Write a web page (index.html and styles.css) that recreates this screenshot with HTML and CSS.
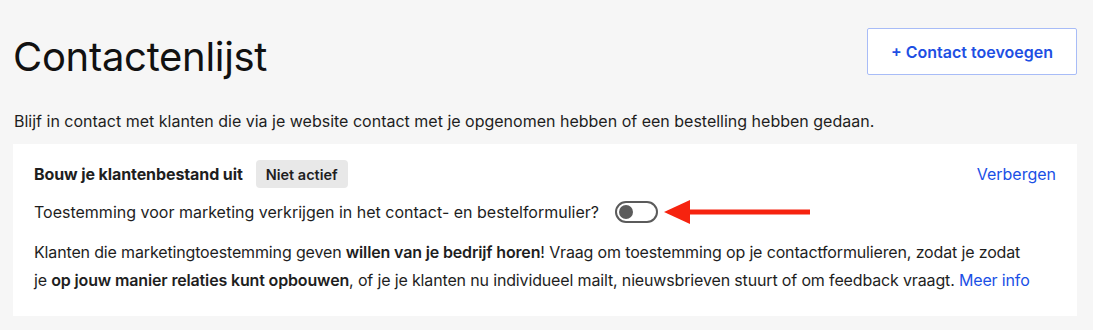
FILE: index.html
```html
<!DOCTYPE html>
<html lang="nl">
<head>
<meta charset="utf-8">
<title>Contactenlijst</title>
<link rel="stylesheet" href="styles.css">
</head>
<body>
<div class="page">
  <header class="header">
    <h1 class="title">Contactenlijst</h1>
    <button class="add-btn">+ Contact toevoegen</button>
  </header>
  <p class="intro">Blijf in contact met klanten die via je website contact met je opgenomen hebben of een bestelling hebben gedaan.</p>
  <section class="card">
    <div class="card-head">
      <div class="card-title">
        <strong>Bouw je klantenbestand uit</strong>
        <span class="badge">Niet actief</span>
      </div>
      <a class="link" href="#">Verbergen</a>
    </div>
    <div class="consent">
      <span>Toestemming voor marketing verkrijgen in het contact- en bestelformulier?</span>
      <span class="toggle"><span class="knob"></span></span>
      <span class="arrow-wrap">
        <svg class="arrow" width="148" height="26" viewBox="0 0 148 26">
          <polygon points="0,13 26,1 26,25" fill="#f6230f"/>
          <rect x="24" y="10.5" width="122" height="5" fill="#f6230f"/>
        </svg>
      </span>
    </div>
    <p class="desc">Klanten die marketingtoestemming geven <b>willen van je bedrijf horen</b>! Vraag om toestemming op je contactformulieren, zodat je zodat je <b>op jouw manier relaties kunt opbouwen</b>, of je je klanten nu individueel mailt, nieuwsbrieven stuurt of om feedback vraagt. <a class="link" href="#">Meer info</a></p>
  </section>
</div>
</body>
</html>
```

FILE: styles.css
```css
* { box-sizing: border-box; }
html, body { margin: 0; padding: 0; }
body {
  background: #f6f6f6;
  font-family: "Inter", "Liberation Sans", sans-serif;
  color: #1e1e1e;
}
.page {
  padding: 28px 16px 0 13px;
}
.header {
  display: flex;
  justify-content: space-between;
  align-items: flex-start;
}
.title {
  margin: 5px 0 0;
  font-size: 40px;
  font-weight: 400;
  line-height: 47px;
  color: #111;
  letter-spacing: -0.3px;
}
.add-btn {
  width: 210px;
  height: 47px;
  background: #fff;
  border: 1px solid #a8bcf7;
  border-radius: 2px;
  color: #1e4fe3;
  font-family: inherit;
  font-size: 16px;
  font-weight: 600;
}
.intro {
  margin: 31px 0 0 1px;
  font-size: 16px;
  line-height: 20px;
}
.card {
  margin-top: 13px;
  background: #fff;
  padding: 16px 21px 22px;
}
.card-head {
  display: flex;
  justify-content: space-between;
  align-items: center;
}
.card-title {
  display: flex;
  align-items: center;
  gap: 13px;
  font-size: 16px;
}
.card-title strong { font-weight: 700; letter-spacing: -0.1px; }
.badge {
  background: #e8e8e8;
  border-radius: 4px;
  height: 28px;
  padding: 0 10px;
  display: inline-flex;
  align-items: center;
  font-size: 14.5px;
  font-weight: 600;
}
.link {
  color: #1a50e6;
  text-decoration: none;
  font-size: 16px;
}
.consent {
  display: flex;
  align-items: center;
  margin-top: 12px;
  height: 24px;
  font-size: 16px;
}
.toggle {
  margin-left: 16px;
  width: 43px;
  height: 22px;
  border: 2px solid #5b5b5b;
  border-radius: 11px;
  display: inline-flex;
  align-items: center;
  padding-left: 2px;
}
.knob {
  width: 14px;
  height: 14px;
  border-radius: 50%;
  background: #5b5b5b;
}
.arrow-wrap {
  margin-left: 6px;
  display: inline-flex;
}
.desc {
  margin: 14px 0 0;
  max-width: 1000px;
  font-size: 16px;
  line-height: 28px;
  letter-spacing: -0.15px;
}
.desc b { font-weight: 600; }
```
